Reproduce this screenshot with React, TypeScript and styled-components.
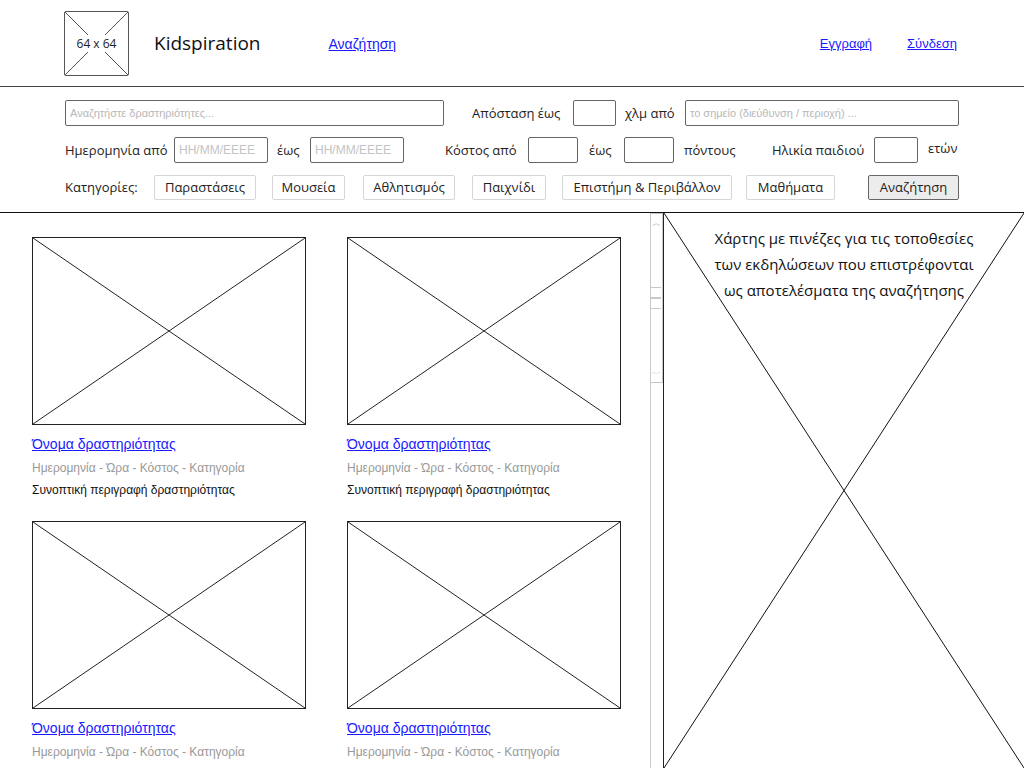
import React from 'react';
import styled, { createGlobalStyle } from 'styled-components';

const GlobalStyle = createGlobalStyle`
  html, body {
    margin: 0;
    padding: 0;
    background: #fff;
  }
  body {
    font-family: 'Open Sans', 'DejaVu Sans', sans-serif;
    color: #222;
    overflow: hidden;
  }
`;

const sketch = "'Open Sans', 'DejaVu Sans', sans-serif";
const plain = "'Liberation Sans', Arial, sans-serif";

const StyledHeader = styled.header`
  height: 86px;
  border-bottom: 1.5px solid #444;
  display: flex;
  align-items: center;
  padding: 0 66px 0 64px;
`;

const StyledLogo = styled.div`
  width: 63px;
  height: 63px;
  border: 1.5px solid #555;
  border-radius: 2px;
  position: relative;
  display: flex;
  align-items: center;
  justify-content: center;
  font-size: 12px;
  flex-shrink: 0;
  svg {
    position: absolute;
    inset: 0;
  }
  span {
    position: relative;
    background: #fff;
    padding: 0 1px;
  }
`;

const StyledTitle = styled.h1`
  margin: 0 0 0 25px;
  font-family: ${sketch};
  font-size: 19px;
  font-weight: 400;
  color: #111;
`;

const StyledLink = styled.a<{ $size?: number }>`
  font-family: ${plain};
  font-size: ${(p) => p.$size || 13}px;
  color: #1a1aff;
  text-decoration: underline;
  cursor: pointer;
`;

const StyledNav = styled.nav`
  margin-left: 68px;
`;

const StyledAuth = styled.nav`
  margin-left: auto;
  display: flex;
  gap: 35px;
  padding-right: 1px;
`;

const StyledFilters = styled.section`
  height: 126px;
  box-sizing: border-box;
  padding: 13px 0 0 65px;
  border-bottom: 1px solid #111;
  display: flex;
  flex-direction: column;
  gap: 11px;
`;

const StyledRow = styled.div`
  display: flex;
  align-items: center;
  height: 26px;
`;

const StyledLabel = styled.span<{ $w?: number; $ml?: number; $up?: boolean }>`
  font-family: ${sketch};
  font-size: 13px;
  color: #222;
  white-space: nowrap;
  width: ${(p) => (p.$w ? `${p.$w}px` : 'auto')};
  margin-left: ${(p) => p.$ml || 0}px;
  flex-shrink: 0;
  position: relative;
  top: ${(p) => (p.$up ? -2 : 0)}px;
`;

const StyledInput = styled.input<{ $w: number; $ml?: number }>`
  width: ${(p) => p.$w}px;
  height: 26px;
  margin: 0 0 0 ${(p) => p.$ml || 0}px;
  box-sizing: border-box;
  border: 1.5px solid #666;
  border-radius: 2px;
  padding: 0 4px;
  font-family: ${plain};
  font-size: 11px;
  color: #222;
  outline: none;
  flex-shrink: 0;
  &::placeholder {
    color: #b8b8b8;
  }
`;

const StyledDateInput = styled(StyledInput)`
  font-size: 12px;
  &::placeholder {
    color: #c4c4c4;
  }
`;

const StyledChip = styled.button<{ $w: number; $ml: number; $primary?: boolean }>`
  width: ${(p) => p.$w}px;
  height: 25px;
  margin-left: ${(p) => p.$ml}px;
  padding: 0;
  box-sizing: border-box;
  border: ${(p) => (p.$primary ? '1.5px solid #666' : '1.5px solid #d6d6d6')};
  background: ${(p) => (p.$primary ? '#ececec' : '#fff')};
  border-radius: 2px;
  font-family: ${sketch};
  font-size: 13px;
  color: #222;
  flex-shrink: 0;
  cursor: pointer;
`;

const StyledMain = styled.main`
  height: 555px;
  display: grid;
  grid-template-columns: 650px 14px 1fr;
`;

const StyledResults = styled.div`
  padding: 24px 0 0 32px;
  display: grid;
  grid-template-columns: 275px 275px;
  column-gap: 40px;
  row-gap: 24px;
  align-content: start;
  overflow: hidden;
`;

const StyledCard = styled.article`
  display: flex;
  flex-direction: column;
`;

const StyledThumb = styled.div`
  width: 274px;
  height: 188px;
  box-sizing: border-box;
  border: 1.5px solid #222;
  position: relative;
  svg {
    position: absolute;
    inset: 0;
  }
`;

const StyledCardTitle = styled(StyledLink)`
  margin-top: 10px;
  font-size: 14px;
  line-height: 18px;
`;

const StyledMeta = styled.div`
  margin-top: 8px;
  font-family: ${plain};
  font-size: 12px;
  color: #999;
  line-height: 14px;
`;

const StyledDesc = styled.div`
  margin-top: 8px;
  font-family: ${plain};
  font-size: 12px;
  color: #111;
  line-height: 14px;
`;

const StyledScrollbar = styled.div`
  border-left: 1.5px solid #c8c8c8;
  border-right: 1.5px solid #222;
  display: flex;
  flex-direction: column;
`;

const StyledThumbBar = styled.div`
  height: 170px;
  box-sizing: border-box;
  border: 1px solid #c8c8c8;
  border-left: none;
  display: flex;
  flex-direction: column;
  align-items: center;
  justify-content: space-between;
  padding: 4px 0;
  color: #aaa;
  font-size: 9px;
  line-height: 9px;
`;

const StyledGrip = styled.div`
  width: 100%;
  display: flex;
  flex-direction: column;
  gap: 9px;
  span {
    display: block;
    height: 1.5px;
    width: 10px;
    background: #c8c8c8;
  }
`;

const StyledMap = styled.div`
  position: relative;
  svg {
    position: absolute;
    inset: 0;
  }
`;

const StyledMapText = styled.p`
  position: relative;
  margin: 12px 0 0;
  text-align: center;
  font-family: ${sketch};
  font-size: 15px;
  line-height: 26px;
  color: #111;
`;

const Cross = ({ color = '#222' }: { color?: string }) => (
  <svg width="100%" height="100%" viewBox="0 0 100 100" preserveAspectRatio="none">
    <line x1="0" y1="0" x2="100" y2="100" stroke={color} strokeWidth="1" vectorEffect="non-scaling-stroke" />
    <line x1="100" y1="0" x2="0" y2="100" stroke={color} strokeWidth="1" vectorEffect="non-scaling-stroke" />
  </svg>
);

const categories = [
  { name: 'Παραστάσεις', w: 102, ml: 15 },
  { name: 'Μουσεία', w: 73, ml: 16 },
  { name: 'Αθλητισμός', w: 92, ml: 18 },
  { name: 'Παιχνίδι', w: 74, ml: 17 },
  { name: 'Επιστήμη & Περιβάλλον', w: 170, ml: 16 },
  { name: 'Μαθήματα', w: 89, ml: 14 },
];

// only the first row of results shows its description; the second row runs past the fold
const cards = [
  { id: 1, desc: true },
  { id: 2, desc: true },
  { id: 3, desc: false },
  { id: 4, desc: false },
];

const App = () => {
  return (
    <>
      <GlobalStyle />
      <StyledHeader>
        <StyledLogo>
          <Cross color="#555" />
          <span>64 x 64</span>
        </StyledLogo>
        <StyledTitle>Kidspiration</StyledTitle>
        <StyledNav>
          <StyledLink $size={14}>Αναζήτηση</StyledLink>
        </StyledNav>
        <StyledAuth>
          <StyledLink>Εγγραφή</StyledLink>
          <StyledLink>Σύνδεση</StyledLink>
        </StyledAuth>
      </StyledHeader>

      <StyledFilters>
        <StyledRow>
          <StyledInput $w={379} placeholder="Αναζητήστε δραστηριότητες..." />
          <StyledLabel $ml={28} $w={101}>Απόσταση έως</StyledLabel>
          <StyledInput $w={43} />
          <StyledLabel $ml={9} $w={60}>χλμ από</StyledLabel>
          <StyledInput $w={274} placeholder="το σημείο (διεύθυνση / περιοχή) ..." />
        </StyledRow>
        <StyledRow>
          <StyledLabel $w={109}>Ημερομηνία από</StyledLabel>
          <StyledDateInput $w={94} placeholder="ΗΗ/ΜΜ/ΕΕΕΕ" />
          <StyledLabel $ml={9} $w={33}>έως</StyledLabel>
          <StyledDateInput $w={94} placeholder="ΗΗ/ΜΜ/ΕΕΕΕ" />
          <StyledLabel $ml={41} $w={83}>Κόστος από</StyledLabel>
          <StyledInput $w={50} />
          <StyledLabel $ml={11} $w={35}>έως</StyledLabel>
          <StyledInput $w={50} />
          <StyledLabel $ml={10} $w={88}>πόντους</StyledLabel>
          <StyledLabel $w={102}>Ηλικία παιδιού</StyledLabel>
          <StyledInput $w={44} />
          <StyledLabel $ml={10} $up>ετών</StyledLabel>
        </StyledRow>
        <StyledRow>
          <StyledLabel $w={74}>Κατηγορίες:</StyledLabel>
          {categories.map((c) => (
            <StyledChip key={c.name} $w={c.w} $ml={c.ml}>
              {c.name}
            </StyledChip>
          ))}
          <StyledChip $w={91} $ml={33} $primary>
            Αναζήτηση
          </StyledChip>
        </StyledRow>
      </StyledFilters>

      <StyledMain>
        <StyledResults>
          {cards.map((card) => (
            <StyledCard key={card.id}>
              <StyledThumb>
                <Cross />
              </StyledThumb>
              <StyledCardTitle>Όνομα δραστηριότητας</StyledCardTitle>
              <StyledMeta>Ημερομηνία - Ώρα - Κόστος - Κατηγορία</StyledMeta>
              {card.desc && <StyledDesc>Συνοπτική περιγραφή δραστηριότητας</StyledDesc>}
            </StyledCard>
          ))}
        </StyledResults>

        <StyledScrollbar>
          <StyledThumbBar>
            <span>︿</span>
            <StyledGrip>
              <span />
              <span />
              <span />
            </StyledGrip>
            <span>﹀</span>
          </StyledThumbBar>
        </StyledScrollbar>

        <StyledMap>
          <Cross color="#111" />
          <StyledMapText>
            Χάρτης με πινέζες για τις τοποθεσίες
            <br />
            των εκδηλώσεων που επιστρέφονται
            <br />
            ως αποτελέσματα της αναζήτησης
          </StyledMapText>
        </StyledMap>
      </StyledMain>
    </>
  );
};

export default App;
